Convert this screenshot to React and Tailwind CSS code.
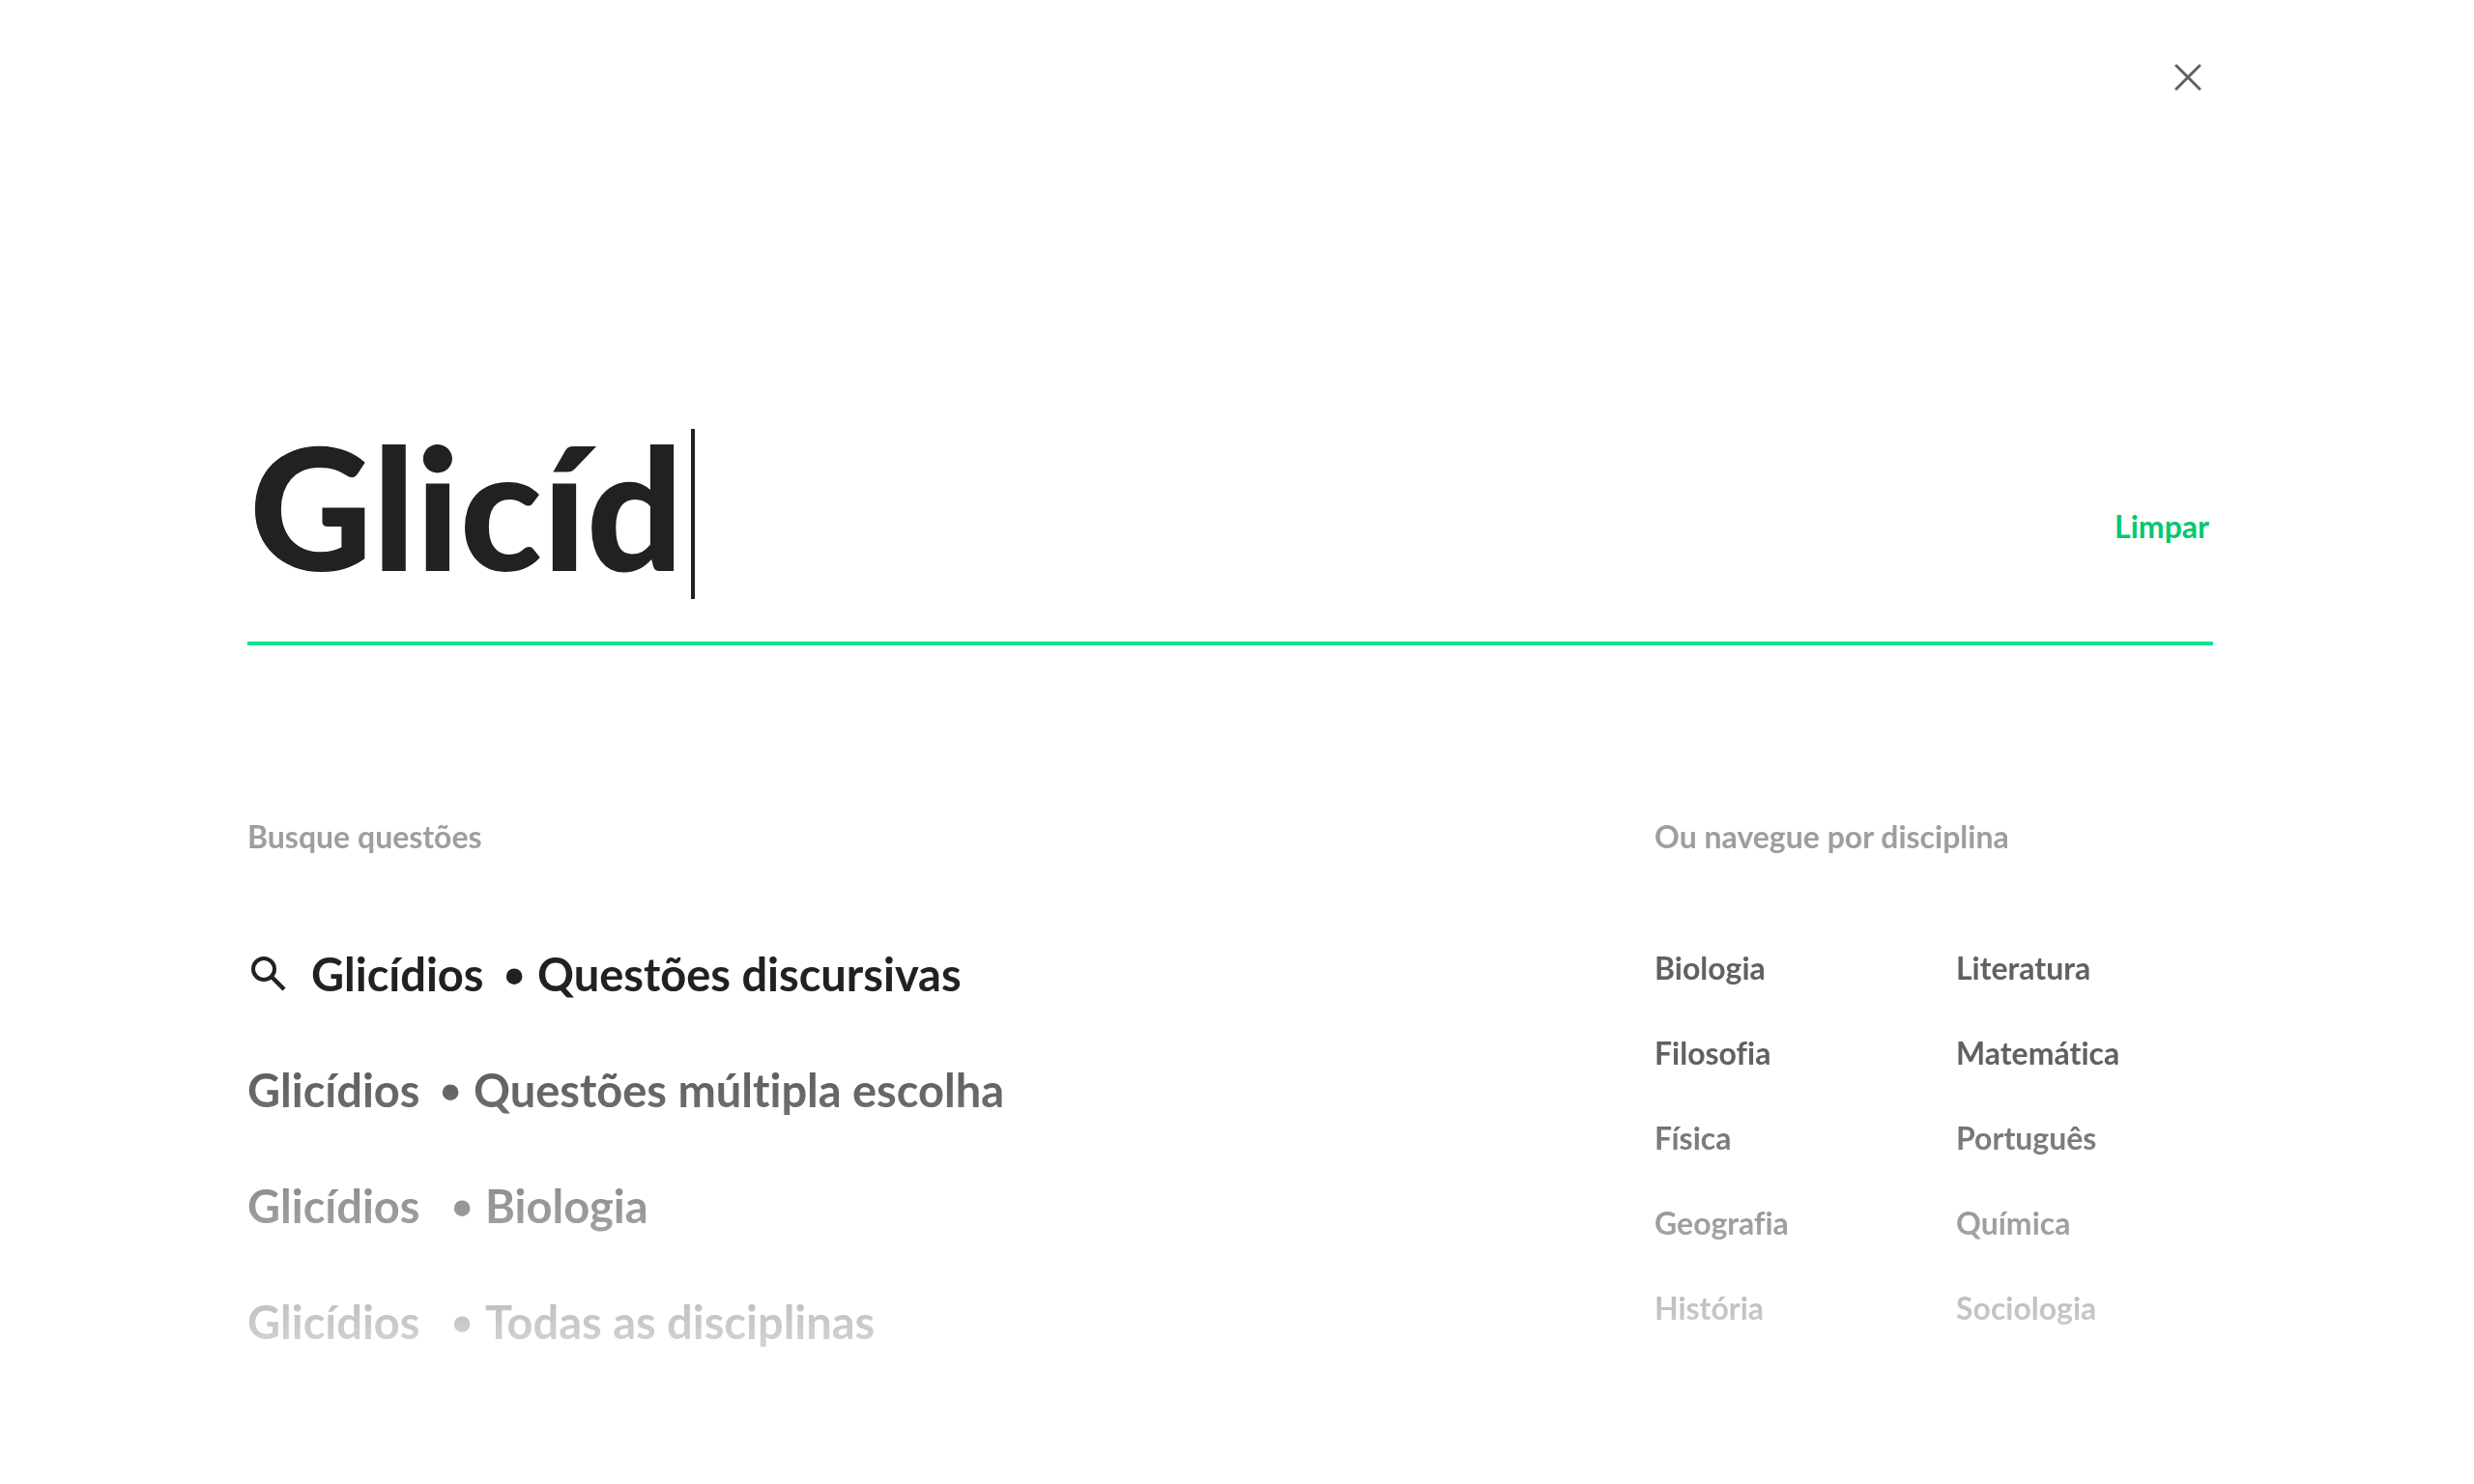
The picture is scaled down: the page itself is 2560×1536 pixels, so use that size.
import React, { useState } from "react";

const suggestions = [
  { term: "Glicídios", scope: "Questões discursivas", active: true },
  { term: "Glicídios", scope: "Questões múltipla escolha" },
  { term: "Glicídios", scope: "Biologia", spaced: true },
  { term: "Glicídios", scope: "Todas as disciplinas", spaced: true },
];

const subjects = [
  "Biologia",
  "Filosofia",
  "Física",
  "Geografia",
  "História",
  "Literatura",
  "Matemática",
  "Português",
  "Química",
  "Sociologia",
];

function CloseIcon() {
  return (
    <svg
      className="size-7"
      viewBox="0 0 28 28"
      fill="none"
      stroke="currentColor"
      strokeWidth="3"
      strokeLinecap="round"
      aria-hidden="true"
    >
      <path d="M2 2L26 26M26 2L2 26" />
    </svg>
  );
}

function SearchIcon() {
  return (
    <svg
      className="size-[36px] shrink-0"
      viewBox="0 0 36 36"
      fill="none"
      stroke="currentColor"
      strokeWidth="4"
      aria-hidden="true"
    >
      <circle cx="13" cy="13" r="11" />
      <path d="M21 21L34 34" strokeWidth="4.4" />
    </svg>
  );
}

function Suggestion({ item }) {
  return (
    <li>
      <a
        href="#resultados"
        className={
          item.active
            ? "flex h-[60px] items-center text-[#212121]"
            : "flex h-[60px] items-center text-[#616161]"
        }
      >
        {item.active && (
          <span className="mr-[26px] ml-1 flex">
            <SearchIcon />
          </span>
        )}
        <span className="w-[182px] whitespace-nowrap">{item.term}</span>
        <span
          className={
            item.spaced
              ? "ml-[30px] w-[34px] pt-1 font-['Liberation_Sans',sans-serif] text-[58px]"
              : "ml-[18px] w-[34px] pt-1 font-['Liberation_Sans',sans-serif] text-[58px]"
          }
        >
          •
        </span>
        <span className="whitespace-nowrap">{item.scope}</span>
      </a>
    </li>
  );
}

export default function App() {
  const [query, setQuery] = useState("Glicíd");

  return (
    <div className="min-h-screen bg-white pr-[270px] pl-[256px] font-['Lato',sans-serif] font-bold text-[#212121] [font-variant-ligatures:none]">
      <header className="flex h-[160px] items-center justify-end pr-3">
        <button type="button" aria-label="Fechar" className="text-[#616161]">
          <CloseIcon />
        </button>
      </header>

      <form
        className="mt-[284px] flex items-center justify-between border-b-4 border-[#00e88f] pb-[44px]"
        onSubmit={(e) => e.preventDefault()}
      >
        <div className="flex h-[176px] items-start gap-2">
          <input
            type="text"
            aria-label="Buscar"
            value={query}
            onChange={(e) => setQuery(e.target.value)}
            className="field-sizing-content h-[156px] bg-transparent pl-0.5 text-[176px] leading-[156px] font-black caret-transparent outline-none"
          />
          <span className="h-[176px] w-1 bg-[#212121]" />
        </div>
        <button
          type="button"
          onClick={() => setQuery("")}
          className="mt-[26px] mr-1 text-[32px] leading-[40px] text-[#00c870]"
        >
          Limpar
        </button>
      </form>

      <main className="mt-[178px] flex justify-between [mask-image:linear-gradient(to_bottom,black_272px,transparent_654px)]">
        <section>
          <h2 className="text-[32px] leading-[40px] text-[#9e9e9e]">Busque questões</h2>
          <ul className="mt-[92px] flex flex-col gap-[60px] text-[47px] leading-[60px]">
            {suggestions.map((item) => (
              <Suggestion key={item.scope} item={item} />
            ))}
          </ul>
        </section>

        <section className="w-[578px]">
          <h2 className="text-[32px] leading-[40px] text-[#9e9e9e]">Ou navegue por disciplina</h2>
          <ul className="mt-[96px] grid grid-flow-col grid-cols-[312px_1fr] grid-rows-5 gap-y-[48px] text-[32px] leading-[40px] text-[#616161]">
            {subjects.map((name) => (
              <li key={name}>
                <a href="#disciplina">{name}</a>
              </li>
            ))}
          </ul>
        </section>
      </main>
    </div>
  );
}
